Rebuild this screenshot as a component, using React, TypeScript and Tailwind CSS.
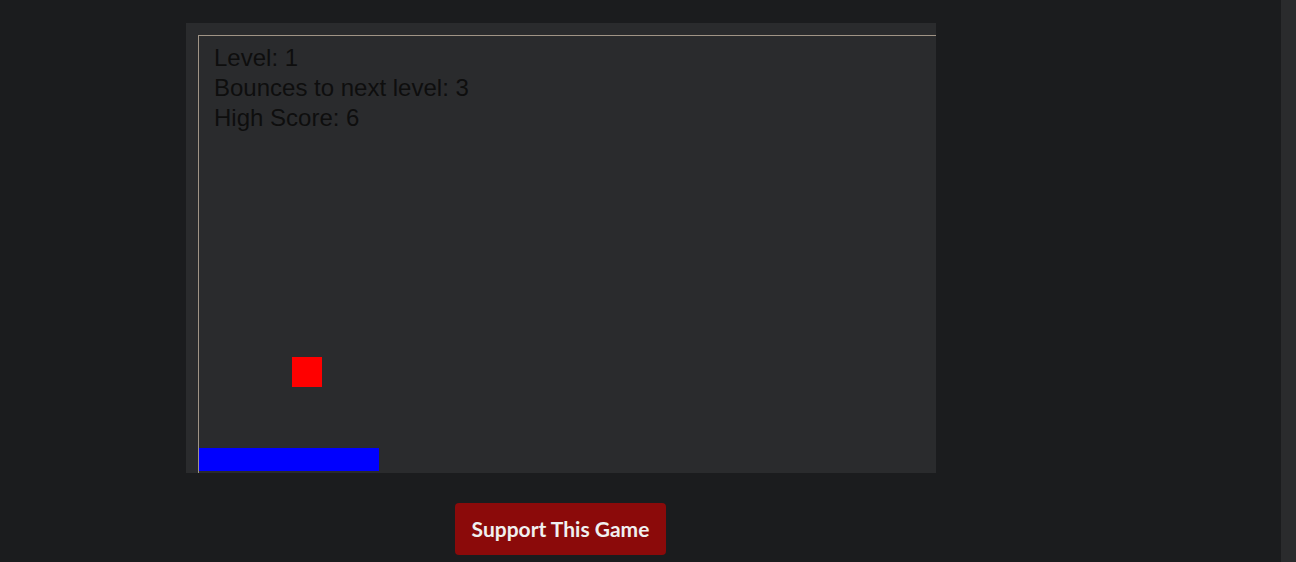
export default function App() {
  return (
    <div className="flex h-[562px] w-[1296px] overflow-hidden bg-[#1b1c1e]">
      <div className="flex w-[1281px] flex-col">
        <div className="ml-[186px] mt-[23px] flex w-[750px] flex-col">
          <div className="h-[450px] w-[750px] overflow-hidden bg-[#2a2b2d] pl-[12px] pt-[12px]">
            <div className="relative h-[800px] w-[1000px] border-l border-t border-[#a09486]">
              <div className="pl-[15px] pt-[7px] font-['Liberation_Sans',Arial,sans-serif] text-[24px] leading-[30px] text-[#0e0e0e]">
                <div>Level: 1</div>
                <div>Bounces to next level: 3</div>
                <div>High Score: 6</div>
              </div>
              <div className="absolute left-[93px] top-[321px] h-[30px] w-[30px] bg-[#ff0000]" />
              <div className="absolute left-0 top-[412px] h-[23px] w-[180px] bg-[#0000ff]" />
            </div>
          </div>
          <button className="ml-[269px] mt-[30px] h-[52px] w-[211px] rounded-[4px] bg-[#8b0a0a] font-['Lato',sans-serif] text-[21px] font-bold text-[#f0f0f0]">
            Support This Game
          </button>
        </div>
      </div>
      <div className="h-full w-[15px] bg-[#2a2b2d]" />
    </div>
  );
}
